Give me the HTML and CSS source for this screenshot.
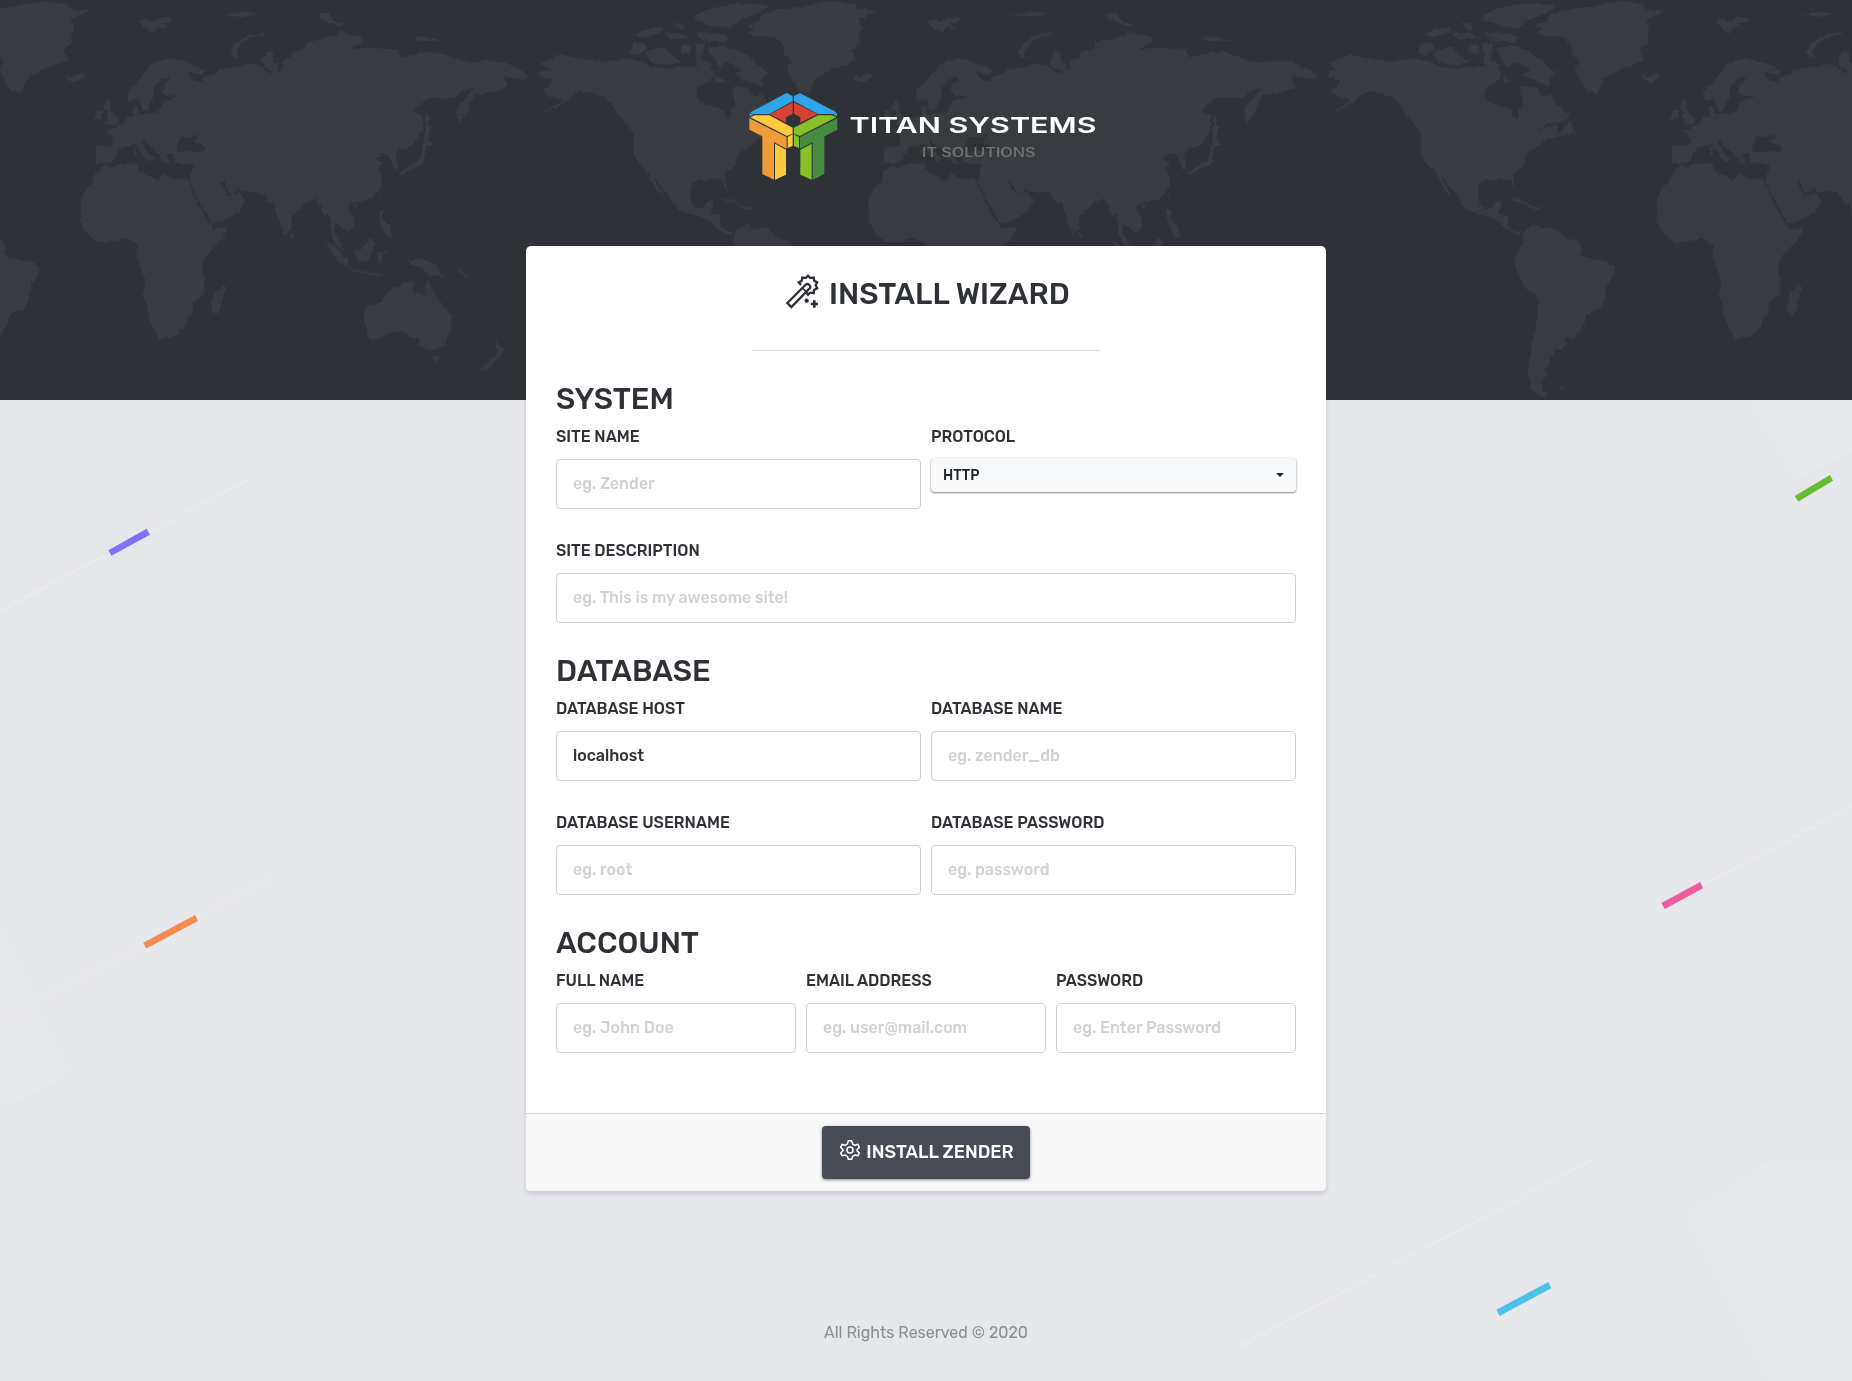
FILE: index.html
```html
<!DOCTYPE html>
<html lang="en">
<head>
<meta charset="utf-8">
<title>Install Wizard</title>
<link rel="stylesheet" href="styles.css">
</head>
<body>
<svg class="backdrop" width="1852" height="1381" viewBox="0 0 1852 1381" aria-hidden="true">
  <defs>
    <linearGradient id="beam"><stop offset="0" stop-color="#e6e8eb"/><stop offset=".75" stop-color="#e6e8eb"/><stop offset="1" stop-color="#e7e8e9"/></linearGradient>
    <linearGradient id="beamFlip"><stop offset="0" stop-color="#e7e8e9"/><stop offset=".3" stop-color="#e6e8eb"/><stop offset="1" stop-color="#e6e8eb"/></linearGradient>
  </defs>
  <g transform="translate(0 400) scale(.3355 .4974)">
    <path fill="url(#beam)" d="M0 890 620 700 930 1135 0 1425Z"/>
    <path fill="#e7e9ea" d="M0 1060 205 1355 0 1425Z"/>
    <path fill="url(#beam)" d="M0 1452 420 1325 600 1530 0 1720Z"/>
  </g>
  <g transform="translate(1326 400) scale(.3355 .6257)">
    <path fill="url(#beamFlip)" d="M380 0H1568V82L735 328Z"/>
    <path fill="#e7e9ea" d="M1270 0H1568V82L1400 128Z"/>
    <path fill="url(#beamFlip)" d="M1230 205 1568 100V540Z"/>
    <path fill="url(#beamFlip)" d="M380 1495 1320 1217H1568V1568H450Z"/>
    <path fill="#e7e9ea" d="M1070 1300 1320 1217H1568V1568H1320Z"/>
  </g>
  <g stroke="#eaebee" stroke-width="2" fill="none">
    <path d="M0 611 248 480M0 1021 278 875M1652 807"/>
    <path d="M1652 911 1852 807M1238 1347 1592 1160"/>
  </g>
  <path fill="#7f72f8" d="M108.400 550.200 146.600 528.800 150 534.800 111.400 555.700Z"/>
  <path fill="#f28a52" d="M143.200 942.700 195.200 915 198 921 146.300 948.600Z"/>
  <path fill="#64bc30" d="M1794.700 495.900 1830 475 1833 480.800 1798.400 501.400Z"/>
  <path fill="#ee5c9f" d="M1661.500 903 1700.200 882 1703 888.200 1664.900 909Z"/>
  <path fill="#4bc1e8" d="M1496.400 1309.700 1548.400 1282 1551.300 1288.200 1499.400 1316Z"/>
</svg>

<header class="banner">
  <svg class="map" width="1852" height="400" viewBox="0 0 1852 400" aria-hidden="true">
    <defs>
      <filter id="coast" x="0" y="0" width="1852" height="400" filterUnits="userSpaceOnUse" color-interpolation-filters="sRGB">
        <feTurbulence type="fractalNoise" baseFrequency=".22" numOctaves="2" seed="4"/>
        <feDisplacementMap in="SourceGraphic" scale="4" xChannelSelector="R" yChannelSelector="G"/>
      </filter>
      <g id="oldWorld" transform="scale(.3954 .3333)">
        <path d="M243 437 282 437 287 420 280 403 266 394 285 388 300 375 315 367 318 352 340 347 336 322 347 318 352 342 375 341 405 335 410 310 425 300 455 289 418 286 410 275 415 255 430 238 422 230 408 238 388 262 390 285 380 310 372 330 360 332 350 295 330 303 320 290 325 268 345 250 365 220 380 195 405 183 430 175 460 183 500 198 518 212 510 225 475 215 485 240 510 245 515 232 545 220 555 208 600 200 630 190 660 200 680 220 690 215 668 200 663 180 675 152 690 155 692 190 705 190 700 215 715 205 710 180 735 175 740 155 775 145 775 128 830 112 855 105 860 92 890 105 915 108 920 125 885 148 930 143 1005 148 1015 172 1050 165 1070 155 1110 158 1150 175 1190 188 1230 182 1275 186 1310 205 1340 228 1325 240 1275 228 1285 258 1250 275 1215 285 1200 285 1190 310 1178 345 1160 370 1152 335 1160 315 1180 290 1200 262 1170 272 1150 295 1085 295 1060 315 1045 335 1070 345 1070 390 1045 435 1010 450 1000 468 1008 500 998 512 990 485 985 468 965 458 948 478 970 485 955 500 968 535 965 560 940 597 905 606 885 612 878 625 895 655 895 682 878 700 862 682 848 668 843 690 862 730 870 755 850 735 838 705 835 660 828 640 820 650 810 615 798 597 775 607 738 650 737 685 722 705 710 680 697 635 693 605 683 612 660 577 610 575 600 565 595 580 580 582 565 545 558 545 575 585 600 582 605 575 622 602 605 635 560 665 533 672 525 645 500 600 482 553 480 535 490 493 475 492 440 488 438 462 430 460 420 465 430 490 415 490 400 460 375 435 360 418 358 428 375 460 390 475 375 487 350 445 345 432 330 437 310 440 295 460 290 480 275 490 255 490 242 488Z"/>
        <path d="M262 497 280 503 300 492 348 490 348 512 380 528 398 542 410 523 440 535 475 538 482 560 505 620 533 675 540 687 577 680 565 715 540 745 515 780 510 805 517 840 517 880 487 908 490 938 475 950 470 975 445 1008 400 1020 393 995 378 960 373 920 360 888 368 845 345 770 348 733 318 714 285 725 250 728 225 705 202 665 205 625 202 600 222 560 237 545 240 520Z"/>
        <path class="sea" d="M445 440 458 410 475 412 505 405 490 425 520 442 518 455 475 452 450 458Z"/>
        <path d="M568 850 572 865 555 935 545 945 534 930 540 880 555 868Z"/>
        <path d="M1020 845 1048 850 1042 868 1072 887 1080 838 1095 870 1110 900 1140 945 1142 975 1125 1040 1090 1050 1068 1045 1055 1010 1045 1015 1015 992 985 1000 970 1012 940 1020 930 1010 922 950 922 920 965 905 975 885 995 860 1008 865ZM1095 1068 1113 1070 1103 1088 1097 1080Z"/>
        <path d="M1250 1018 1262 1035 1278 1045 1265 1065 1232 1112 1215 1108 1245 1075 1258 1062ZM1035 785 1055 775 1105 792 1110 810 1123 835 1100 825 1085 828 1070 805 1045 795ZM895 755 915 745 940 712 950 730 942 755 930 785 905 780ZM820 720 845 738 880 780 878 802 855 785ZM880 805 930 815 990 825 960 828 895 815ZM955 758 985 750 965 768 972 795 962 780 957 802ZM735 690 746 710 738 717ZM960 628 970 632 965 655 985 675 992 710 980 715 965 680 957 645ZM962 575 966 580 961 600ZM893 615 905 612 900 626Z"/>
        <path d="M1078 340 1085 350 1082 372 1090 380 1082 415 1098 432 1078 442 1070 495 1040 505 1018 530 1010 520 1035 500 1062 480 1068 455 1072 430ZM270 298 280 305 278 325 290 345 302 358 298 372 265 374 278 362 268 350 274 335 262 325ZM245 330 262 332 255 358 238 360ZM165 222 180 232 205 220 217 230 190 248 170 240ZM352 62 375 58 385 68 405 52 442 53 425 68 410 70 425 88 405 80 385 100 365 82ZM580 160 595 130 630 105 670 97 670 103 635 112 610 130 598 155 602 172 630 185 590 170ZM545 45 580 42 620 35 655 40 620 50 590 48ZM805 40 830 38 845 65 875 72 860 80 835 68 810 55ZM1052 110 1090 112 1125 122 1088 124 1055 122ZM340 437 347 440 345 470 339 465ZM1145 795 1170 815 1188 833 1165 820ZM1200 907 1216 922 1205 916Z"/>
      </g>
      <g id="newWorld" transform="translate(1300) scale(.352 .3333)">
        <path d="M80 192 100 180 140 163 180 172 260 185 320 175 370 185 400 200 450 208 470 198 520 200 560 205 575 220 560 245 530 262 523 290 540 308 575 318 600 328 605 350 618 358 622 325 635 318 630 290 628 258 670 262 690 290 710 282 730 315 762 340 762 355 740 368 700 372 675 395 700 382 730 375 735 400 760 370 765 365 785 400 760 405 735 410 700 420 675 440 650 455 638 470 638 495 608 520 605 540 613 572 603 560 598 540 570 535 550 542 530 538 510 552 505 580 510 610 525 628 548 622 555 605 573 603 565 640 592 648 592 680 612 697 632 695 625 705 610 703 585 688 565 665 535 650 510 643 475 630 458 612 445 585 420 555 402 528 410 550 432 590 415 575 398 545 385 515 365 500 345 465 342 440 345 400 325 370 300 345 290 320 265 295 235 282 195 273 175 285 155 305 120 325 70 347 120 318 145 300 100 288 85 268 108 258 115 240 75 228 80 215 105 208Z"/>
        <path d="M632 697 655 680 670 672 685 685 725 685 745 705 760 717 790 722 802 748 795 765 840 780 870 785 895 800 895 820 872 855 868 895 855 925 830 935 812 945 808 970 785 1005 770 1018 752 1012 760 1030 750 1045 725 1052 722 1068 708 1070 710 1090 697 1108 702 1125 685 1150 690 1175 705 1188 680 1190 655 1165 648 1120 658 1035 668 1000 678 900 670 885 640 865 610 800 615 765 632 735Z"/>
        <path d="M665 78 700 65 710 45 750 30 820 20 900 3 980 12 975 25 1038 32 985 60 995 85 985 110 990 130 965 150 978 180 945 195 915 205 880 225 862 235 845 282 815 272 795 240 780 205 795 185 775 165 770 135 745 110 690 108 670 98 690 85Z"/>
        <path d="M518 48 560 25 640 10 730 15 700 40 650 60 620 85 570 78 550 70 520 60ZM350 105 385 85 430 80 420 100 375 112ZM335 160 345 128 375 130 385 145 360 165ZM378 155 430 140 455 165 480 185 450 195 395 190ZM518 130 548 130 540 175 525 170ZM555 145 600 138 640 150 680 175 710 205 730 218 710 235 710 260 665 240 630 225 655 210 610 185 590 205 575 180ZM520 95 570 97 620 110 610 125 540 122ZM480 135 510 135 505 162 480 155ZM575 225 608 245 580 250ZM460 65 490 75 485 90 465 80ZM430 100 480 98 510 115 450 120ZM520 165 570 195 560 208 525 202ZM590 597 620 595 660 618 690 625 665 630 640 612ZM738 1158 755 1160 742 1168Z"/>
      </g>
    </defs>
    <g filter="url(#coast)">
      <use href="#oldWorld"/><use href="#oldWorld" x="788"/><use href="#oldWorld" x="1576"/>
      <use href="#newWorld" x="-1576"/><use href="#newWorld" x="-788"/><use href="#newWorld"/>
    </g>
  </svg>
</header>

<main class="page">
  <svg class="logo" width="380" height="110" viewBox="0 0 380 110" role="img" aria-label="Titan Systems IT Solutions">
    <g transform="translate(10) scale(.33333)">
      <path fill="#2fa4e6" d="M31 97 140 39 158 48V64L88 102H37ZM162 48 180 39 289 97 284 102H234L162 64ZM29 99 40 104 29 109ZM291 99 280 104 291 109Z"/>
      <path fill="#da4135" d="M90 103 158 67V101L138 112V128ZM162 67 232 103 181 128V112L162 101Z"/>
      <path fill="#fdca3d" d="M31 112 44 106H88L158 143V161L141 168ZM143 171 158 163V198L143 204ZM105 191 138 209V284L105 299Z"/>
      <path fill="#86c129" d="M289 112 276 106H234L162 143V161L179 168ZM162 163 177 171V204L162 198ZM215 191V299L181 284V209Z"/>
      <path fill="#f09c3b" d="M28 115 140 171V206L102 187V299L67 282V169L28 149Z"/>
      <path fill="#488c43" d="M292 115 180 171V206L218 187V299L253 282V169L292 149Z"/>
    </g>
    <text class="logo-name" x="119.500" y="52.900" textLength="247" lengthAdjust="spacingAndGlyphs">TITAN SYSTEMS</text>
    <text class="logo-tag" x="192" y="76.500" textLength="113.500" lengthAdjust="spacingAndGlyphs">IT SOLUTIONS</text>
  </svg>

  <form class="card">
    <div class="card-body">
      <h1 class="title">
        <svg class="wand" width="40" height="42" viewBox="0 0 120 126" fill="none" stroke="#2e3136" stroke-width="7" aria-hidden="true">
          <path d="M57 42 50.400 34 59.400 29.500 61 19.500 71 21 78 14 85 21 95 19.500 96.600 29.500 105.600 34 101 43 105.600 52 96.600 56.500 95 66.500 85 65 78 71 73 64"/>
          <path d="M16 96 70 42Q76 36 82 42T82 53L28 108Z"/>
          <path d="M61 51 72 62" stroke-width="5"/>
          <circle cx="74" cy="89" r="6.500" fill="#2e3136" stroke="none"/>
          <path d="M97 88V110M86 99H108" stroke-width="8"/>
        </svg>
        <span>INSTALL WIZARD</span>
      </h1>
      <hr class="rule">

      <section class="section">
        <h2 class="heading">SYSTEM</h2>
        <div class="grid two">
          <label class="field"><span class="label">SITE NAME</span><input class="input" placeholder="eg. Zender"></label>
          <div class="field"><span class="label">PROTOCOL</span><button type="button" class="select">HTTP<i class="caret"></i></button></div>
          <label class="field wide"><span class="label">SITE DESCRIPTION</span><input class="input" placeholder="eg. This is my awesome site!"></label>
        </div>
      </section>
      <section class="section">
        <h2 class="heading">DATABASE</h2>
        <div class="grid two">
          <label class="field"><span class="label">DATABASE HOST</span><input class="input" value="localhost"></label>
          <label class="field"><span class="label">DATABASE NAME</span><input class="input" placeholder="eg. zender_db"></label>
          <label class="field"><span class="label">DATABASE USERNAME</span><input class="input" placeholder="eg. root"></label>
          <label class="field"><span class="label">DATABASE PASSWORD</span><input class="input" placeholder="eg. password"></label>
        </div>
      </section>
      <section class="section">
        <h2 class="heading">ACCOUNT</h2>
        <div class="grid three">
          <label class="field"><span class="label">FULL NAME</span><input class="input" placeholder="eg. John Doe"></label>
          <label class="field"><span class="label">EMAIL ADDRESS</span><input class="input" placeholder="eg. user@mail.com"></label>
          <label class="field"><span class="label">PASSWORD</span><input class="input" placeholder="eg. Enter Password"></label>
        </div>
      </section>
    </div>
    <div class="card-footer">
      <button type="button" class="install">
        <svg class="gear" width="20" height="20" viewBox="0 0 60 60" fill="none" stroke="#fff" stroke-width="4.500" stroke-linejoin="round" aria-hidden="true">
          <path d="M25 2H35L38 12 45 16 54 13 58 22 51 29V32L58 39 54 47 45 45 38 49 35 58H25L22 49 15 45 6 47 2 39 9 32V29L2 22 6 13 15 16 22 12Z"/>
          <circle cx="30" cy="30" r="9"/>
        </svg>
        <span>INSTALL ZENDER</span>
      </button>
    </div>
  </form>
  <p class="copyright">All Rights Reserved © 2020</p>
</main>
</body>
</html>
```
FILE: styles.css
```css
* { box-sizing: border-box; }
body {
  margin: 0;
  height: 1381px;
  position: relative;
  overflow: hidden;
  background: #e5e7eb;
  color: #2e3136;
  font-family: Rubik, Roboto, "Liberation Sans", sans-serif;
  font-size: 16px;
}
.backdrop, .banner { position: absolute; left: 0; top: 0; }
.banner { width: 100%; height: 400px; background: #2e3136; overflow: hidden; }
.map { display: block; fill: #383b40; }
.sea { fill: #2e3136; }

.page {
  position: relative;
  display: flex;
  flex-direction: column;
  align-items: center;
  padding-top: 80px;
}
.logo { display: block; margin: 0 12px 56px 0; }
.logo-name, .logo-tag { font-family: Inter, "DejaVu Sans", sans-serif; }
.logo-name { font-size: 22px; font-weight: 600; fill: #fff; }
.logo-tag { font-size: 12.500px; font-weight: 500; fill: #747474; }

.card {
  width: 800px;
  border-radius: 5px;
  background: #fff;
  box-shadow: 0 3px 5px rgba(46, 49, 54, .14);
}
.card-body { padding: 30px 30px 31px; }
.title {
  display: flex;
  justify-content: center;
  align-items: center;
  gap: 7px;
  height: 36px;
  margin: 0 0 38px;
  font-size: 30px;
  line-height: 36px;
  font-weight: 500;
}
.wand { margin-top: -5px; }
.rule { width: 348px; height: 1px; margin: 0 auto 30px; border: 0; background: #dcdddf; }
.heading { margin: 0 0 8px; font-size: 30px; line-height: 36px; font-weight: 500; }
.section:last-child { margin-bottom: -1px; }
.grid { display: grid; column-gap: 10px; }
.two { grid-template-columns: 1fr 1fr; }
.three { grid-template-columns: 1fr 1fr 1fr; }
.wide { grid-column: 1 / -1; }
.field { display: flex; flex-direction: column; height: 114px; min-width: 0; }
.label { height: 24px; margin-bottom: 10px; line-height: 24px; font-weight: 500; }
.input {
  width: 100%;
  height: 50px;
  padding: 0 16px 2px;
  border: 1px solid #d0d1d3;
  border-radius: 4px;
  background: #fff;
  color: #2e3136;
  font: 500 16px Rubik, Roboto, sans-serif;
}
.input::placeholder { color: #d1d2d4; opacity: 1; }
.select {
  display: flex;
  align-items: center;
  justify-content: space-between;
  height: 34px;
  margin-top: -1px;
  padding: 0 12px;
  border: 0;
  border-radius: 4px;
  background: #f8f9fb;
  color: #212529;
  font: 500 14px Rubik, Roboto, sans-serif;
  box-shadow: 0 1px 2px rgba(0, 0, 0, .45), 0 0 3px rgba(0, 0, 0, .08);
}
.caret { border: 4px solid transparent; border-top-color: #212529; border-bottom: 0; }
.card-footer {
  display: flex;
  justify-content: center;
  padding: 12px 0;
  border-top: 1px solid #d5d6d8;
  border-radius: 0 0 5px 5px;
  background: #f7f7f7;
}
.install {
  display: flex;
  align-items: center;
  justify-content: center;
  gap: 6px;
  width: 208px;
  height: 53px;
  padding: 0 0 2px 2px;
  border: 0;
  border-radius: 4px;
  background: #474b54;
  color: #fff;
  font: 500 18px Rubik, Roboto, sans-serif;
  box-shadow: 0 1px 3px rgba(0, 0, 0, .45);
}
.gear { margin-top: -3px; }
.copyright { margin: 130px 0 0; line-height: 24px; color: #8d8f93; }
```
